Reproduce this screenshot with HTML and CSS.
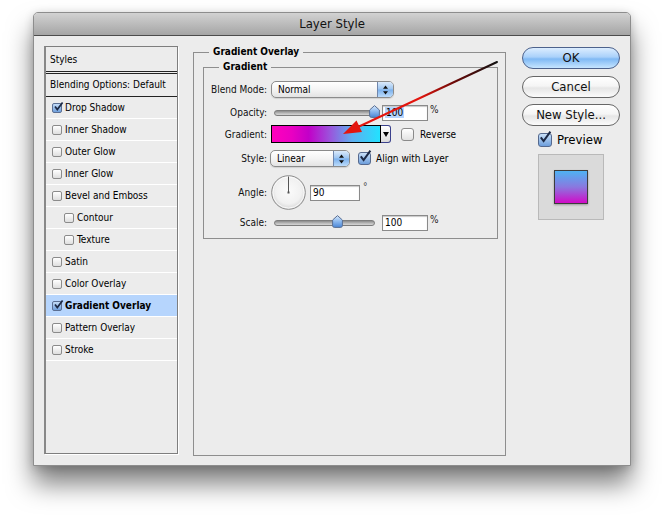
FILE: index.html
```html
<!DOCTYPE html>
<html>
<head>
<meta charset="utf-8">
<title>Layer Style</title>
<link rel="stylesheet" href="styles.css">
</head>
<body>
<div class="page">
  <div class="window">
    <div class="titlebar">Layer Style</div>
    <div class="content">
      <div class="styles-panel">
        <div class="styles-head">Styles</div>
        <div class="blend-head">Blending Options: Default</div>
        <ul class="style-list">
          <li><span class="cb on"><svg viewBox="0 0 10 10" width="10" height="10"><path d="M2 4.5 L4.3 7.6 L9.6 0.4" fill="none" stroke="#1d2a45" stroke-width="1.7"/></svg></span>Drop Shadow</li>
          <li><span class="cb"></span>Inner Shadow</li>
          <li><span class="cb"></span>Outer Glow</li>
          <li><span class="cb"></span>Inner Glow</li>
          <li><span class="cb"></span>Bevel and Emboss</li>
          <li class="sub"><span class="cb"></span>Contour</li>
          <li class="sub"><span class="cb"></span>Texture</li>
          <li><span class="cb"></span>Satin</li>
          <li><span class="cb"></span>Color Overlay</li>
          <li class="active"><span class="cb on"><svg viewBox="0 0 10 10" width="10" height="10"><path d="M2 4.5 L4.3 7.6 L9.6 0.4" fill="none" stroke="#1d2a45" stroke-width="1.7"/></svg></span><b class="bold-item">Gradient Overlay</b></li>
          <li><span class="cb"></span>Pattern Overlay</li>
          <li><span class="cb"></span>Stroke</li>
        </ul>
      </div>

      <fieldset class="main-group">
        <legend class="legend-main">Gradient Overlay</legend>
        <fieldset class="sub-group">
          <legend class="legend-sub">Gradient</legend>
          <div class="rows">
            <div class="row r-blend">
              <span class="lbl">Blend Mode:</span>
              <div class="select blend-select"><span class="sel-text">Normal</span>
                <span class="stepper"><svg viewBox="0 0 7 10" width="7" height="10"><path d="M3.5 0.5 L6 3.8 H1 Z M3.5 9.5 L6 6.2 H1 Z" fill="#111"/></svg></span>
              </div>
            </div>
            <div class="row r-opacity">
              <span class="lbl">Opacity:</span>
              <div class="slider op-slider">
                <div class="track"></div>
                <svg class="thumb op-thumb" viewBox="0 0 11 13" width="11" height="13"><defs><linearGradient id="tg1" x1="0" y1="0" x2="0" y2="1"><stop offset="0" stop-color="#d7e8fb"/><stop offset="0.5" stop-color="#8bb8ee"/><stop offset="1" stop-color="#4b86d6"/></linearGradient></defs><path d="M5.5 0.6 L10.4 5 V10.6 Q10.4 12.4 8.6 12.4 H2.4 Q0.6 12.4 0.6 10.6 V5 Z" fill="url(#tg1)" stroke="#5a6f93" stroke-width="1"/></svg>
              </div>
              <div class="field op-field"><span class="hl">100</span></div>
              <span class="unit">%</span>
            </div>
            <div class="row r-gradient">
              <span class="lbl">Gradient:</span>
              <div class="grad"></div>
              <div class="grad-btn"><svg viewBox="0 0 6 5" width="6" height="5"><path d="M0 0 H6 L3 5 Z" fill="#000"/></svg></div>
              <span class="check rev-check"></span>
              <span class="opt-text">Reverse</span>
            </div>
            <div class="row r-style">
              <span class="lbl">Style:</span>
              <div class="select style-select"><span class="sel-text">Linear</span>
                <span class="stepper"><svg viewBox="0 0 7 10" width="7" height="10"><path d="M3.5 0.5 L6 3.8 H1 Z M3.5 9.5 L6 6.2 H1 Z" fill="#111"/></svg></span>
              </div>
              <span class="check on align-check"><svg viewBox="0 0 13 13" width="13" height="13"><path d="M2.8 6.3 L5.6 10 L12.4 0.6" fill="none" stroke="#1b2844" stroke-width="2"/></svg></span>
              <span class="opt-text align-text">Align with Layer</span>
            </div>
            <div class="row r-angle">
              <span class="lbl">Angle:</span>
              <svg class="dial" viewBox="0 0 35 35" width="35" height="35">
                <defs><radialGradient id="dg" cx="0.5" cy="0.45" r="0.55"><stop offset="0" stop-color="#fbfbfb"/><stop offset="0.7" stop-color="#f1f1f1"/><stop offset="1" stop-color="#d6d6d6"/></radialGradient></defs>
                <circle cx="17.5" cy="17.5" r="16.8" fill="url(#dg)" stroke="#8c8c8c" stroke-width="1"/>
                <circle cx="17.5" cy="17.5" r="15.6" fill="none" stroke="#ffffff" stroke-width="0.8"/>
                <line x1="17.5" y1="1.5" x2="17.5" y2="17.5" stroke="#555" stroke-width="1"/>
                <rect x="16.5" y="16.5" width="2" height="2" fill="#555"/>
              </svg>
              <div class="field angle-field">90</div>
              <span class="deg">°</span>
            </div>
            <div class="row r-scale">
              <span class="lbl">Scale:</span>
              <div class="slider sc-slider">
                <div class="track"></div>
                <svg class="thumb sc-thumb" viewBox="0 0 11 13" width="11" height="13"><defs><linearGradient id="tg2" x1="0" y1="0" x2="0" y2="1"><stop offset="0" stop-color="#d7e8fb"/><stop offset="0.5" stop-color="#8bb8ee"/><stop offset="1" stop-color="#4b86d6"/></linearGradient></defs><path d="M5.5 0.6 L10.4 5 V10.6 Q10.4 12.4 8.6 12.4 H2.4 Q0.6 12.4 0.6 10.6 V5 Z" fill="url(#tg2)" stroke="#5a6f93" stroke-width="1"/></svg>
              </div>
              <div class="field sc-field">100</div>
              <span class="unit">%</span>
            </div>
          </div>
        </fieldset>
      </fieldset>

      <div class="buttons">
        <div class="btn default">OK</div>
        <div class="btn cancel">Cancel</div>
        <div class="btn newstyle">New Style...</div>
        <div class="preview-check">
          <span class="check on pv-check"><svg viewBox="0 0 13 13" width="13" height="13"><path d="M2.8 6.3 L5.6 10 L12.4 0.6" fill="none" stroke="#1b2844" stroke-width="2"/></svg></span>
          <span>Preview</span>
        </div>
        <div class="preview-box"><div class="swatch"></div></div>
      </div>
    </div>
  </div>
</div>
<svg class="arrow" viewBox="0 0 663 515" width="663" height="515">
  <defs>
    <linearGradient id="ag" gradientUnits="userSpaceOnUse" x1="497" y1="62" x2="420" y2="98">
      <stop offset="0" stop-color="#111"/>
      <stop offset="0.55" stop-color="#6a0a08"/>
      <stop offset="1" stop-color="#e3150e"/>
    </linearGradient>
  </defs>
  <line x1="497" y1="62" x2="358" y2="127" stroke="url(#ag)" stroke-width="2" stroke-linecap="round"/>
  <polygon points="343,134 356.5,120.5 362,132" fill="#e3150e"/>
</svg>
</body>
</html>
```

FILE: styles.css
```css
* {
  box-sizing: border-box;
}

body {
  margin: 0;
  width: 663px;
  height: 515px;
  overflow: hidden;
  position: relative;
  background: #ffffff;
  font-family: "DejaVu Sans Condensed", "DejaVu Sans", sans-serif;
  font-stretch: semi-condensed;
  font-size: 10px;
  color: #000;
}

.page {
  padding: 12px 0 0 33px;
}

.window {
  width: 598px;
  height: 454px;
  background: #ececec;
  border: 1px solid #8d8d8d;
  border-radius: 5px 5px 0 0;
  box-shadow: 0 18px 26px rgba(0, 0, 0, 0.5), 0 2px 10px rgba(0, 0, 0, 0.18);
}

.titlebar {
  height: 23px;
  background: linear-gradient(#d2d2d2, #a5a5a5);
  border-bottom: 1px solid #4c4c4c;
  border-radius: 4px 4px 0 0;
  text-align: center;
  font-size: 13px;
  line-height: 22px;
  color: #111;
}

.content {
  display: flex;
  align-items: flex-start;
  padding: 10px 0 0 10px;
}

/* ---------- Styles list ---------- */
.styles-panel {
  width: 134px;
  height: 408px;
  border: 1px solid #7e7e7e;
  border-left: 2px solid #888;
  box-shadow: 1px 1px 0 #ffffff;
}

.styles-head {
  height: 27px;
  line-height: 26px;
  padding-left: 4px;
  border-bottom: 3px double #222;
}

.blend-head {
  height: 23px;
  line-height: 22px;
  padding-left: 4px;
  border-bottom: 1px solid #222;
}

.style-list {
  list-style: none;
  margin: 0;
  padding: 0;
}

.style-list li {
  height: 22px;
  border-bottom: 1px solid #ffffff;
  display: flex;
  align-items: center;
  padding-left: 6px;
  gap: 3px;
}

.style-list li.sub {
  padding-left: 18px;
}

.style-list li.active {
  background: #b6d5fd;
}

.bold-item {
  font-weight: bold;
}

.cb {
  width: 10px;
  height: 10px;
  border: 1px solid #8b8b8b;
  border-radius: 2px;
  background: linear-gradient(#ffffff, #dedede);
  position: relative;
  flex: none;
}

.cb.on {
  background: linear-gradient(#c4dcf7, #6f9fdc);
  border-color: #5b6f93;
}

.cb svg {
  position: absolute;
  left: 0;
  top: -2px;
  overflow: visible;
}

/* ---------- Fieldsets ---------- */
.main-group {
  width: 313px;
  height: 410px;
  margin: 0 0 0 15px;
  padding: 0 7px 0 9px;
  border: 1px solid #8e8e8e;
  min-width: 0;
}

.legend-main,
.legend-sub {
  font-weight: bold;
  line-height: 12px;
  padding: 0 4px;
}

.legend-main {
  margin-left: 6px;
}

.sub-group {
  width: 295px;
  height: 178px;
  margin: 3px 0 0 0;
  padding: 0;
  border: 1px solid #8e8e8e;
  min-width: 0;
}

.legend-sub {
  margin-left: 15px;
}

.rows {
  padding-top: 8px;
}

.row {
  display: flex;
  align-items: center;
}

.lbl {
  width: 63px;
  margin-right: 4px;
  text-align: right;
  color: #111;
}

.r-blend { height: 17px; }
.r-opacity { height: 17px; margin-top: 6px; }
.r-gradient { height: 18px; margin-top: 4px; }
.r-style { height: 17px; margin-top: 7px; }
.r-angle { height: 35px; margin-top: 8px; }
.r-scale { height: 17px; margin-top: 4px; }

/* select */
.select {
  height: 17px;
  border: 1px solid #8b8b8b;
  border-radius: 5px;
  background: linear-gradient(#ffffff, #f4f4f4 50%, #e3e3e3);
  display: flex;
  align-items: center;
  overflow: hidden;
  box-shadow: 0 1px 1px rgba(0, 0, 0, 0.12);
}

.blend-select {
  width: 123px;
}

.style-select {
  width: 80px;
  margin-left: -1px;
}

.sel-text {
  padding-left: 6px;
}

.stepper {
  margin-left: auto;
  width: 16px;
  height: 100%;
  border-left: 1px solid #7086ab;
  background: linear-gradient(#dbeafb, #9cc5f1 48%, #7bb0ec 52%, #bcdcfb);
  display: flex;
  align-items: center;
  justify-content: center;
}

/* slider */
.slider {
  position: relative;
  height: 17px;
  margin-left: 3px;
}

.op-slider {
  width: 105px;
}

.sc-slider {
  width: 101px;
}

.track {
  margin-top: 6px;
  height: 6px;
  border: 1px solid #7d7d7d;
  border-radius: 3px;
  background: linear-gradient(#8c8c8c, #bdbdbd 60%, #d6d6d6);
}

.thumb {
  position: absolute;
  top: 1px;
}

.op-thumb {
  left: 95px;
}

.sc-thumb {
  left: 58px;
}

/* text fields */
.field {
  height: 16px;
  border: 1px solid #8a8a8a;
  background: #ffffff;
  box-shadow: inset 0 1px 1px rgba(0, 0, 0, 0.22);
  padding-left: 2px;
  line-height: 14px;
}

.op-field,
.sc-field {
  width: 46px;
}

.op-field {
  margin-left: 3px;
}

.sc-field {
  margin-left: 7px;
}

.hl {
  background: #b5d5ff;
  padding: 0 1px;
}

.unit {
  margin-left: 2px;
  align-self: flex-start;
  color: #222;
}

/* gradient */
.grad {
  width: 110px;
  height: 18px;
  border: 1px solid #000;
  background: linear-gradient(90deg, #ff00bd 0%, #ea00c2 18%, #c200c8 34%, #9a55dc 54%, #5faeef 74%, #22e2ff 100%);
}

.grad-btn {
  width: 10px;
  height: 18px;
  border: 1px solid #3b418c;
  border-left: none;
  border-radius: 0 3px 3px 0;
  background: linear-gradient(#ffffff, #dadada);
  display: flex;
  align-items: center;
  justify-content: center;
}

.check {
  width: 13px;
  height: 13px;
  border: 1px solid #8a8a8a;
  border-radius: 3px;
  background: linear-gradient(#ffffff, #e2e2e2);
  position: relative;
  flex: none;
}

.check.on {
  background: linear-gradient(#c9e0f8, #6d9edc);
  border-color: #55698e;
}

.check svg {
  position: absolute;
  left: -1px;
  top: -3px;
  overflow: visible;
}

.rev-check {
  margin-left: 10px;
}

.align-check {
  margin-left: 8px;
}

.opt-text {
  margin-left: 6px;
}

.align-text {
  margin-left: 5px;
}

/* angle */
.dial {
  flex: none;
}

.angle-field {
  width: 50px;
  margin-left: 4px;
}

.deg {
  margin-left: 3px;
  align-self: flex-start;
  margin-top: 6px;
  color: #444;
}

/* ---------- Buttons ---------- */
.buttons {
  margin: 1px 0 0 16px;
  width: 98px;
  display: flex;
  flex-direction: column;
}

.btn {
  height: 22px;
  border: 1px solid #676767;
  border-radius: 11px;
  background: linear-gradient(#ffffff 0%, #f5f5f5 45%, #e6e6e6 55%, #fbfbfb 100%);
  font-size: 13px;
  line-height: 20px;
  text-align: center;
  color: #111;
}

.btn.default {
  background: linear-gradient(#dcedff 0%, #aad1fa 45%, #80b9f4 55%, #c6e5ff 100%);
  border-color: #4d628c;
}

.cancel {
  margin-top: 7px;
}

.newstyle {
  margin-top: 6px;
}

.preview-check {
  margin: 6px 0 0 16px;
  height: 15px;
  display: flex;
  align-items: center;
  gap: 5px;
  font-size: 13px;
}

.pv-check {
  width: 14px;
  height: 14px;
}

.preview-box {
  margin: 7px 0 0 16px;
  width: 66px;
  height: 66px;
  background: #dadada;
  border: 1px solid #b9b9b9;
  display: flex;
  align-items: center;
  justify-content: center;
}

.swatch {
  width: 34px;
  height: 34px;
  border: 1px solid #3c3c3c;
  background: linear-gradient(#4fb2f3 0%, #8a78df 50%, #d20ac8 100%);
  box-shadow: 0 1px 2px rgba(0, 0, 0, 0.3);
}

/* ---------- Arrow overlay ---------- */
.arrow {
  position: absolute;
  left: 0;
  top: 0;
  pointer-events: none;
}
```
